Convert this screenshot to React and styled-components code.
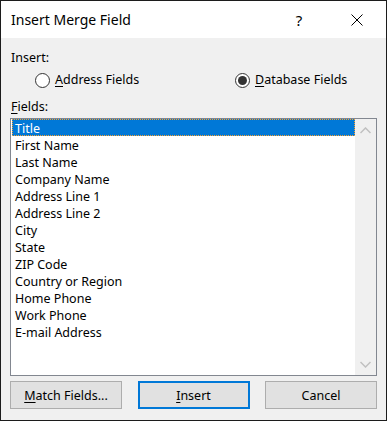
import React from 'react'
import styled, { createGlobalStyle } from 'styled-components'

const GlobalStyle = createGlobalStyle`
  html, body {
    margin: 0;
    padding: 0;
    background: #ffffff;
  }
  * {
    box-sizing: border-box;
  }
`

const fields = [
  'Title',
  'First Name',
  'Last Name',
  'Company Name',
  'Address Line 1',
  'Address Line 2',
  'City',
  'State',
  'ZIP Code',
  'Country or Region',
  'Home Phone',
  'Work Phone',
  'E-mail Address',
]

const StyledWindow = styled.div`
  width: 387px;
  height: 421px;
  border: 1px solid #1c1c1c;
  display: flex;
  flex-direction: column;
  font-family: 'Noto Sans', 'Open Sans', sans-serif;
  font-size: 12.5px;
  color: #000000;
  background: #f0f0f0;
`

const StyledTitleBar = styled.div`
  height: 37px;
  background: #ffffff;
  display: flex;
  align-items: center;
  padding-left: 10px;
`

const StyledTitle = styled.div`
  flex: 1;
  font-size: 14px;
  line-height: 20px;
`

const StyledTitleButton = styled.div`
  width: 58px;
  height: 37px;
  display: flex;
  align-items: center;
  justify-content: center;
  font-size: 15px;
`

const StyledBody = styled.div`
  flex: 1;
  display: flex;
  flex-direction: column;
  padding: 12px 9px 11px 9px;
`

const StyledLabel = styled.div`
  line-height: 16px;
  margin-left: 1px;
  margin-top: ${(props) => props.top || 0}px;
`

const StyledRadioRow = styled.div`
  display: grid;
  grid-template-columns: 200px auto;
  padding-left: 25px;
  margin-top: 6px;
  line-height: 16px;
`

const StyledRadio = styled.label`
  display: flex;
  align-items: center;
  gap: 5px;
`

const StyledCircle = styled.span`
  width: 15px;
  height: 15px;
  border-radius: 50%;
  border: 1px solid #333333;
  background: #ffffff;
  display: flex;
  align-items: center;
  justify-content: center;

  &:after {
    content: '';
    display: ${(props) => (props.checked ? 'block' : 'none')};
    width: 9px;
    height: 9px;
    border-radius: 50%;
    background: #333333;
  }
`

const StyledKey = styled.span`
  text-decoration: underline;
  text-underline-offset: 2px;
`

const StyledListBox = styled.div`
  flex: 1;
  margin-top: 3px;
  border: 1px solid #828790;
  background: #ffffff;
  display: flex;
`

const StyledItems = styled.div`
  flex: 1;
  padding: 0 0 0 1px;
`

const StyledItem = styled.div`
  height: 17px;
  line-height: 17px;
  padding: 1px 0 0 3px;
  background: ${(props) => (props.selected ? '#0078d7' : 'transparent')};
  color: ${(props) => (props.selected ? '#ffffff' : '#000000')};
  outline: ${(props) => (props.selected ? '1px dotted #f7a030' : 'none')};
  outline-offset: -1px;
`

const StyledScrollBar = styled.div`
  width: 21px;
  background: #f0f0f0;
  display: flex;
  flex-direction: column;
  justify-content: space-between;
  align-items: center;
  padding: 8px 0 7px 0;
`

const StyledButtons = styled.div`
  display: flex;
  justify-content: space-between;
  margin-top: 5px;
`

const StyledButton = styled.button`
  width: 112px;
  height: 28px;
  font-family: inherit;
  font-size: 12.5px;
  color: #000000;
  background: #e1e1e1;
  border: ${(props) => (props.primary ? '2px solid #0078d7' : '1px solid #adadad')};
  padding: 0;
`

const Chevron = ({ up }) => (
  <svg width="11" height="7" viewBox="0 0 11 7">
    <path
      d={up ? 'M0.5 6 L5.5 1 L10.5 6' : 'M0.5 1 L5.5 6 L10.5 1'}
      fill="none"
      stroke="#c0c0c0"
      strokeWidth="1.5"
    />
  </svg>
)

const App = () => {
  return (
    <StyledWindow>
      <GlobalStyle />
      <StyledTitleBar>
        <StyledTitle>Insert Merge Field</StyledTitle>
        <StyledTitleButton>?</StyledTitleButton>
        <StyledTitleButton>
          <svg width="12" height="12" viewBox="0 0 12 12">
            <path d="M0.5 0.5 L11.5 11.5 M11.5 0.5 L0.5 11.5" stroke="#000" strokeWidth="1" />
          </svg>
        </StyledTitleButton>
      </StyledTitleBar>
      <StyledBody>
        <StyledLabel>Insert:</StyledLabel>
        <StyledRadioRow>
          <StyledRadio>
            <StyledCircle />
            <span><StyledKey>A</StyledKey>ddress Fields</span>
          </StyledRadio>
          <StyledRadio>
            <StyledCircle checked />
            <span><StyledKey>D</StyledKey>atabase Fields</span>
          </StyledRadio>
        </StyledRadioRow>
        <StyledLabel top={11}><StyledKey>F</StyledKey>ields:</StyledLabel>
        <StyledListBox>
          <StyledItems>
            {fields.map((f, i) => (
              <StyledItem key={f} selected={i === 0}>{f}</StyledItem>
            ))}
          </StyledItems>
          <StyledScrollBar>
            <Chevron up />
            <Chevron />
          </StyledScrollBar>
        </StyledListBox>
        <StyledButtons>
          <StyledButton><StyledKey>M</StyledKey>atch Fields...</StyledButton>
          <StyledButton primary><StyledKey>I</StyledKey>nsert</StyledButton>
          <StyledButton>Cancel</StyledButton>
        </StyledButtons>
      </StyledBody>
    </StyledWindow>
  )
}

export default App
